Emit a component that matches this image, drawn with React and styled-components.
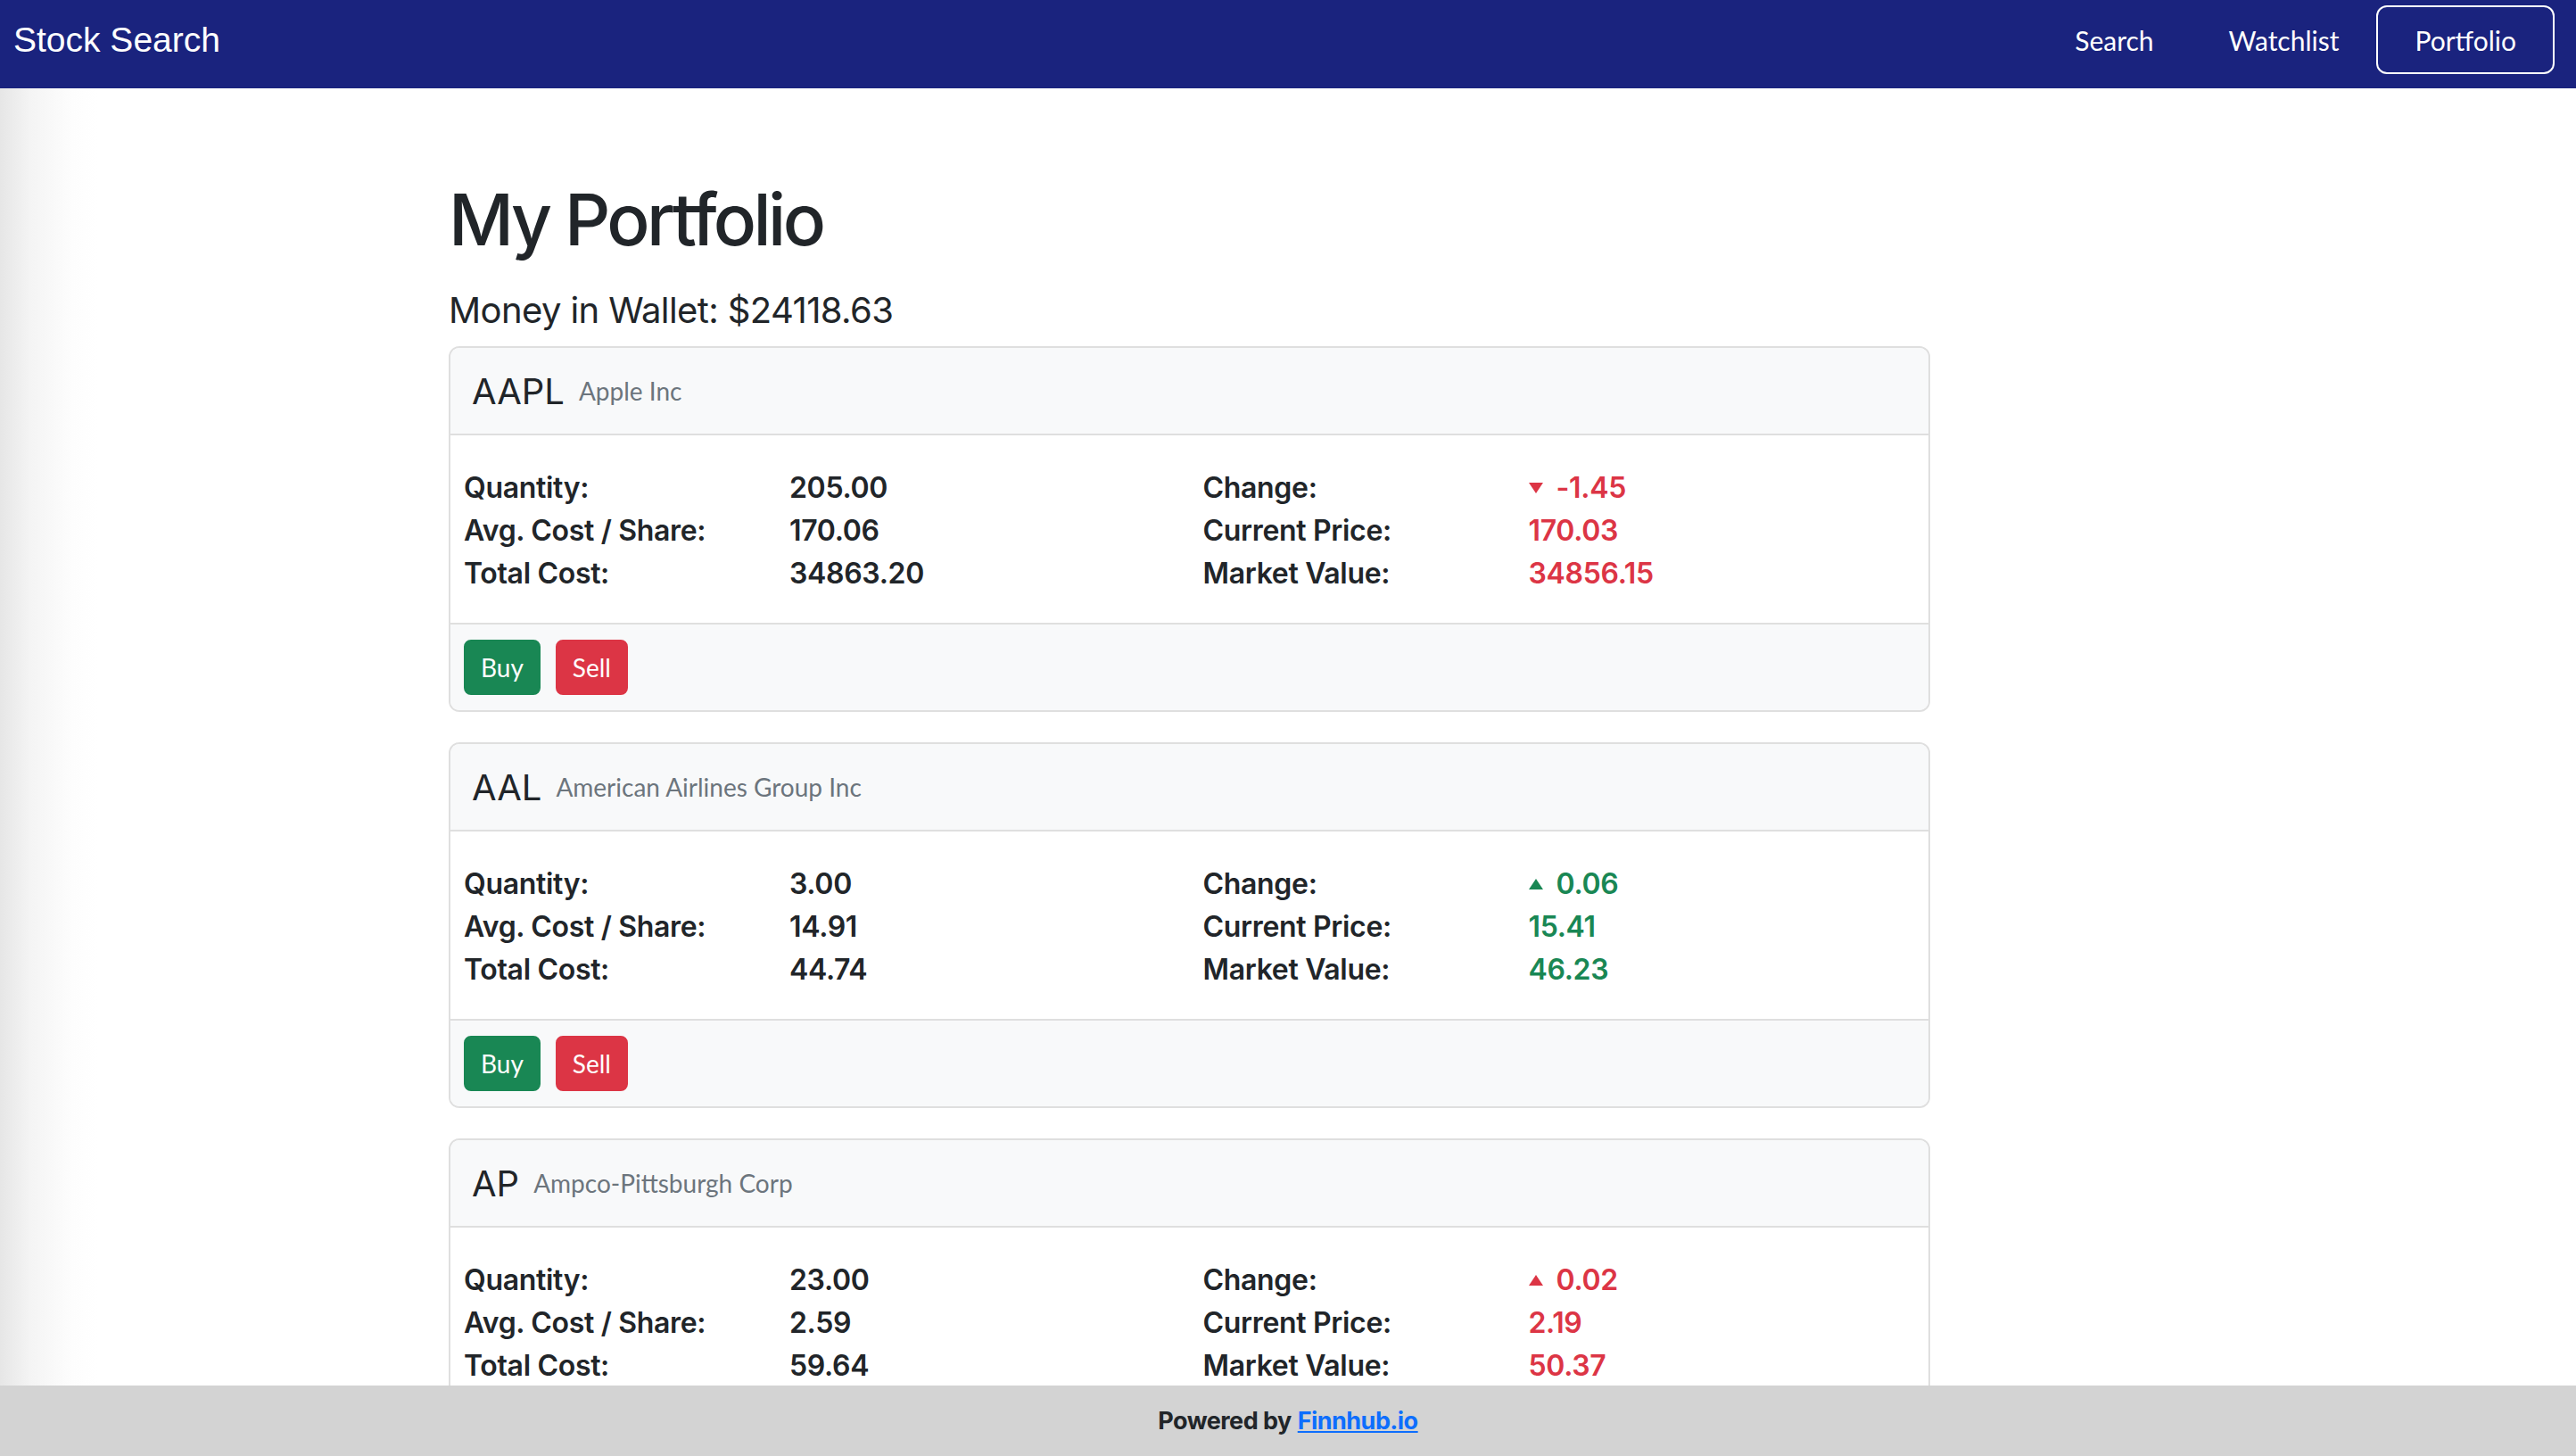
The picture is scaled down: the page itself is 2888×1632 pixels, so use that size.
import React from "react";
import styled, { createGlobalStyle } from "styled-components";

const GlobalStyle = createGlobalStyle`
  html, body {
    margin: 0;
    padding: 0;
  }
  body {
    font-family: Inter, "Noto Sans", sans-serif;
    color: #212529;
    background: linear-gradient(90deg, #e6e6e6 0, #f4f4f4 34px, #fdfdfd 80px, #fff 110px);
    min-height: 100vh;
  }
  * {
    box-sizing: border-box;
  }
`;

const NavBar = styled.nav`
  height: 99px;
  background: #1a237e;
  display: flex;
  align-items: center;
  justify-content: space-between;
  padding: 0 24px 10px 15px;
`;

const Brand = styled.a`
  font-family: "Liberation Sans", Arial, sans-serif;
  font-size: 39px;
  color: #fff;
  text-decoration: none;
`;

const NavLinks = styled.div`
  display: flex;
  align-items: center;
`;

const NavLink = styled.a`
  font-family: Lato, "Open Sans", sans-serif;
  font-size: 30px;
  color: #fff;
  text-decoration: none;
  height: 77px;
  padding: 0 ${(props) => (props.active ? "41px" : "40px")};
  display: flex;
  align-items: center;
  border: 2px solid ${(props) => (props.active ? "#fff" : "transparent")};
  border-radius: 12px;
`;

const Main = styled.main`
  padding: 99px 0 120px 503px;
`;

const Content = styled.div`
  width: 1661px;
`;

const Title = styled.h1`
  margin: 0 0 30px;
  font-size: 80px;
  font-weight: 500;
  line-height: 1.2;
  letter-spacing: -0.045em;
`;

const Wallet = styled.h5`
  margin: 0 0 16px;
  font-size: 40px;
  font-weight: 400;
  line-height: 1.2;
  letter-spacing: -0.015em;
`;

const Card = styled.section`
  border: 2px solid #dfdfdf;
  border-radius: 12px;
  margin-bottom: 34px;
  overflow: hidden;
  background: #fff;
`;

const CardHeader = styled.div`
  height: 98px;
  background: #f8f9fa;
  border-bottom: 2px solid #dfdfdf;
  display: flex;
  align-items: center;
  gap: 16px;
  padding: 0 24px;
`;

const Ticker = styled.span`
  font-size: 40px;
  font-weight: 400;
`;

const Company = styled.span`
  font-family: Lato, "Open Sans", sans-serif;
  font-size: 28px;
  color: #6c757d;
`;

const CardBody = styled.div`
  display: grid;
  grid-template-columns: 1fr 1fr;
  padding: 35px 0 31px;
`;

const Column = styled.div`
  display: grid;
  grid-template-columns: 365px 1fr;
  padding-left: 15px;
  font-size: 32px;
  font-weight: 600;
  letter-spacing: -0.01em;
  line-height: 48px;
`;

const Value = styled.span`
  display: flex;
  align-items: center;
  gap: 15px;
  color: ${(props) => props.color || "#212529"};
`;

const CardFooter = styled.div`
  background: #f8f9fa;
  border-top: 2px solid #dfdfdf;
  padding: 17px 15px;
  display: flex;
  gap: 17px;
`;

const Button = styled.button`
  font-family: Lato, "Open Sans", sans-serif;
  font-size: 28px;
  color: #fff;
  height: 62px;
  padding: 0 17px;
  border: 2px solid ${(props) => props.bg};
  background: ${(props) => props.bg};
  border-radius: 8px;
`;

const PageFooter = styled.footer`
  position: fixed;
  left: 0;
  right: 0;
  bottom: 0;
  height: 79px;
  background: #d3d3d3;
  display: flex;
  align-items: center;
  justify-content: center;
  font-size: 27px;
  font-weight: 700;
  letter-spacing: -0.02em;
`;

const FooterLink = styled.a`
  color: #0d6efd;
  text-decoration: underline;
  margin-left: 7px;
`;

const RED = "#dc3545";
const GREEN = "#198754";

const Caret = ({ up, color }) => (
  <svg width="16" height="12" viewBox="0 0 16 12">
    <polygon points={up ? "8,0 16,12 0,12" : "0,0 16,0 8,12"} fill={color} />
  </svg>
);

const stocks = [
  {
    ticker: "AAPL",
    name: "Apple Inc",
    quantity: "205.00",
    avg: "170.06",
    total: "34863.20",
    change: "-1.45",
    up: false,
    price: "170.03",
    market: "34856.15",
    color: RED,
  },
  {
    ticker: "AAL",
    name: "American Airlines Group Inc",
    quantity: "3.00",
    avg: "14.91",
    total: "44.74",
    change: "0.06",
    up: true,
    price: "15.41",
    market: "46.23",
    color: GREEN,
  },
  {
    ticker: "AP",
    name: "Ampco-Pittsburgh Corp",
    quantity: "23.00",
    avg: "2.59",
    total: "59.64",
    change: "0.02",
    up: true,
    price: "2.19",
    market: "50.37",
    color: RED,
  },
];

const StockCard = ({ stock }) => (
  <Card>
    <CardHeader>
      <Ticker>{stock.ticker}</Ticker>
      <Company>{stock.name}</Company>
    </CardHeader>
    <CardBody>
      <Column>
        <span>Quantity:</span>
        <Value>{stock.quantity}</Value>
        <span>Avg. Cost / Share:</span>
        <Value>{stock.avg}</Value>
        <span>Total Cost:</span>
        <Value>{stock.total}</Value>
      </Column>
      <Column>
        <span>Change:</span>
        <Value color={stock.color}>
          <Caret up={stock.up} color={stock.color} />
          {stock.change}
        </Value>
        <span>Current Price:</span>
        <Value color={stock.color}>{stock.price}</Value>
        <span>Market Value:</span>
        <Value color={stock.color}>{stock.market}</Value>
      </Column>
    </CardBody>
    <CardFooter>
      <Button bg={GREEN}>Buy</Button>
      <Button bg={RED}>Sell</Button>
    </CardFooter>
  </Card>
);

const App = () => (
  <>
    <GlobalStyle />
    <NavBar>
      <Brand href="#">Stock Search</Brand>
      <NavLinks>
        <NavLink href="#">Search</NavLink>
        <NavLink href="#">Watchlist</NavLink>
        <NavLink href="#" active>
          Portfolio
        </NavLink>
      </NavLinks>
    </NavBar>
    <Main>
      <Content>
        <Title>My Portfolio</Title>
        <Wallet>Money in Wallet: $24118.63</Wallet>
        {stocks.map((stock) => (
          <StockCard key={stock.ticker} stock={stock} />
        ))}
      </Content>
    </Main>
    <PageFooter>
      Powered by<FooterLink href="#">Finnhub.io</FooterLink>
    </PageFooter>
  </>
);

export default App;
